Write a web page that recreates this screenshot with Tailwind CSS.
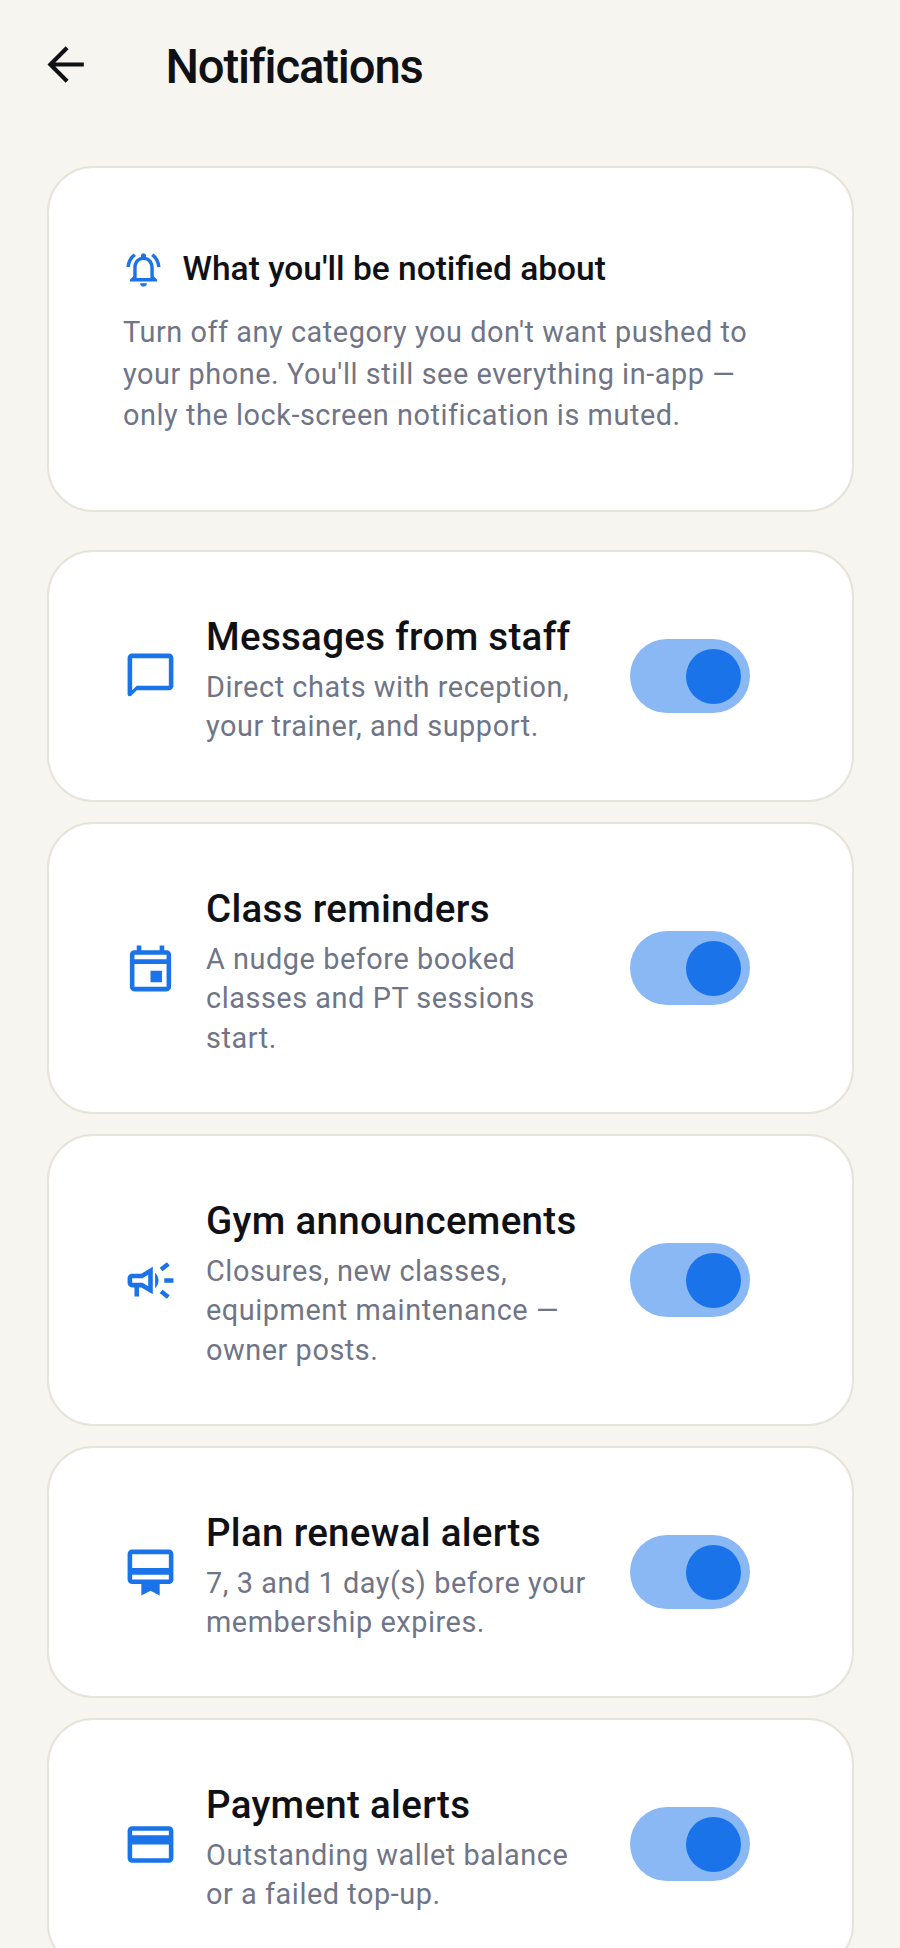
<!doctype html>
<html><head><meta charset="utf-8"><script src="https://cdn.jsdelivr.net/npm/@tailwindcss/browser@4"></script></head>
<body class="m-0">
<div class="w-[900px] h-[1948px] overflow-hidden bg-[#f6f5f0] font-['Roboto',sans-serif] text-[#0f1115]">
  <header class="h-[129px] pl-[37.5px] flex items-center">
    <svg class="w-[55px] h-[55px] shrink-0" viewBox="0 0 24 24" fill="none" stroke="#0f1115" stroke-width="1.8"><path d="M20 12H5.5M12.7 4.7 5.4 12l7.3 7.3"/></svg>
    <h1 class="ml-[73px] mt-[4px] text-[47.25px] leading-[54px] font-medium tracking-[-1.15px]">Notifications</h1>
  </header>
  <main class="mt-[37px] ml-[47px] mr-[46px] flex flex-col gap-[20px]">
    <section class="h-[346px] mb-[18px] bg-white border-2 border-[#e6e4d8] rounded-[46px] px-[74px] pt-[79px]">
      <div class="flex items-center gap-[18.5px] h-[44px]">
        <svg class="w-[41px] h-[41px] shrink-0" viewBox="0 0 24 24" fill="#1a73e8"><path d="M7.58 4.08L6.15 2.65C3.75 4.48 2.17 7.3 2.03 10.5h2c.15-2.65 1.51-4.97 3.55-6.42zm12.39 6.42h2c-.15-3.2-1.73-6.02-4.12-7.85l-1.42 1.43c2.02 1.45 3.39 3.77 3.54 6.42zM18 11c0-3.07-1.64-5.64-4.5-6.32V4c0-.83-.67-1.5-1.5-1.5s-1.5.67-1.5 1.5v.68C7.63 5.36 6 7.92 6 11v5l-2 2v1h16v-1l-2-2v-5zm-2 6H8v-6c0-2.48 1.51-4.5 4-4.5s4 2.02 4 4.5v6zm-4 5c.14 0 .27-.01.4-.04.65-.14 1.18-.58 1.44-1.18.1-.24.15-.5.15-.78h-4c.01 1.1.9 2 2.01 2z"/></svg>
        <h2 class="text-[33.5px] font-medium leading-[44px]">What you'll be notified about</h2>
      </div>
      <p class="mt-[21px] text-[28.875px] leading-[41.5px] tracking-[0.55px] text-[#6f7587]">Turn off any category you don't want pushed to your phone. You'll still see everything in-app — only the lock-screen notification is muted.</p>
    </section>

    <section class="h-[252px] bg-white border-2 border-[#e6e4d8] rounded-[46px] pl-[74px] pr-[102px] flex items-center">
      <svg class="w-[55px] h-[55px] shrink-0" viewBox="0 0 24 24" fill="#1a73e8"><path d="M20 2H4c-1.1 0-2 .9-2 2v15.59c0 .89 1.08 1.34 1.71.71L6 18h14c1.1 0 2-.9 2-2V4c0-1.1-.9-2-2-2zm0 14H6l-2 2V4h16v12z"/></svg>
      <div class="ml-[28px] mt-[2px] w-[394px] shrink-0">
        <h3 class="text-[38.5px] leading-[58px] font-medium tracking-[0.3px]">Messages from staff</h3>
        <p class="mt-[2px] text-[28.875px] leading-[39.4px] tracking-[0.55px] text-[#6f7587]">Direct chats with reception, your trainer, and support.</p>
      </div>
      <div class="ml-[30px] w-[120px] h-[74px] shrink-0 rounded-full bg-[#8ab8f4] flex items-center justify-end pr-[9px]"><div class="w-[55px] h-[55px] rounded-full bg-[#1a73e8]"></div></div>
    </section>

    <section class="h-[292px] bg-white border-2 border-[#e6e4d8] rounded-[46px] pl-[74px] pr-[102px] flex items-center">
      <svg class="w-[55px] h-[55px] shrink-0" viewBox="0 0 24 24" fill="#1a73e8"><path d="M19 4h-1V2h-2v2H8V2H6v2H5c-1.1 0-2 .9-2 2v14c0 1.1.9 2 2 2h14c1.1 0 2-.9 2-2V6c0-1.1-.9-2-2-2zm0 16H5V10h14v10zm0-12H5V6h14v2zM12 13h5v5h-5z"/></svg>
      <div class="ml-[28px] mt-[2px] w-[394px] shrink-0">
        <h3 class="text-[38.5px] leading-[58px] font-medium tracking-[0.3px]">Class reminders</h3>
        <p class="mt-[2px] text-[28.875px] leading-[39.4px] tracking-[0.55px] text-[#6f7587]">A nudge before booked classes and PT sessions start.</p>
      </div>
      <div class="ml-[30px] w-[120px] h-[74px] shrink-0 rounded-full bg-[#8ab8f4] flex items-center justify-end pr-[9px]"><div class="w-[55px] h-[55px] rounded-full bg-[#1a73e8]"></div></div>
    </section>

    <section class="h-[292px] bg-white border-2 border-[#e6e4d8] rounded-[46px] pl-[74px] pr-[102px] flex items-center">
      <svg class="w-[55px] h-[55px] shrink-0" viewBox="0 0 24 24" fill="#1a73e8"><path d="M18 11v2h4v-2h-4zm-2 6.61c.96.71 2.21 1.65 3.2 2.39.4-.53.8-1.07 1.2-1.6-.99-.74-2.24-1.68-3.2-2.4-.4.54-.8 1.08-1.2 1.61zM20.4 5.6c-.4-.53-.8-1.07-1.2-1.6-.99.74-2.24 1.68-3.2 2.4.4.53.8 1.07 1.2 1.6.96-.72 2.21-1.65 3.2-2.4zM4 9c-1.1 0-2 .9-2 2v2c0 1.1.9 2 2 2h1v4h2v-4h1l5 3V6L8 9H4zm5.03 1.71L11 9.53v4.94l-1.97-1.18-.48-.29H4v-2h4.55l.48-.29zM15.5 12c0-1.33-.58-2.53-1.5-3.35v6.69c.92-.81 1.5-2.01 1.5-3.34z"/></svg>
      <div class="ml-[28px] mt-[2px] w-[394px] shrink-0">
        <h3 class="text-[38.5px] leading-[58px] font-medium tracking-[0.3px]">Gym announcements</h3>
        <p class="mt-[2px] text-[28.875px] leading-[39.4px] tracking-[0.55px] text-[#6f7587]">Closures, new classes, equipment maintenance — owner posts.</p>
      </div>
      <div class="ml-[30px] w-[120px] h-[74px] shrink-0 rounded-full bg-[#8ab8f4] flex items-center justify-end pr-[9px]"><div class="w-[55px] h-[55px] rounded-full bg-[#1a73e8]"></div></div>
    </section>

    <section class="h-[252px] bg-white border-2 border-[#e6e4d8] rounded-[46px] pl-[74px] pr-[102px] flex items-center">
      <svg class="w-[55px] h-[55px] shrink-0" viewBox="0 0 24 24" fill="#1a73e8"><path d="M20 2H4c-1.11 0-2 .89-2 2v11c0 1.11.89 2 2 2h4v5l4-2 4 2v-5h4c1.11 0 2-.89 2-2V4c0-1.11-.89-2-2-2zm0 13H4v-2h16v2zm0-5H4V4h16v6z"/></svg>
      <div class="ml-[28px] mt-[2px] w-[394px] shrink-0">
        <h3 class="text-[38.5px] leading-[58px] font-medium tracking-[0.3px]">Plan renewal alerts</h3>
        <p class="mt-[2px] text-[28.875px] leading-[39.4px] tracking-[0.55px] text-[#6f7587]">7, 3 and 1 day(s) before your membership expires.</p>
      </div>
      <div class="ml-[30px] w-[120px] h-[74px] shrink-0 rounded-full bg-[#8ab8f4] flex items-center justify-end pr-[9px]"><div class="w-[55px] h-[55px] rounded-full bg-[#1a73e8]"></div></div>
    </section>

    <section class="h-[252px] shrink-0 bg-white border-2 border-[#e6e4d8] rounded-[46px] pl-[74px] pr-[102px] flex items-center">
      <svg class="w-[55px] h-[55px] shrink-0" viewBox="0 0 24 24" fill="#1a73e8"><path d="M20 4H4c-1.11 0-1.99.89-1.99 2L2 18c0 1.11.89 2 2 2h16c1.11 0 2-.89 2-2V6c0-1.11-.89-2-2-2zm0 14H4v-6h16v6zm0-10H4V6h16v2z"/></svg>
      <div class="ml-[28px] mt-[2px] w-[394px] shrink-0">
        <h3 class="text-[38.5px] leading-[58px] font-medium tracking-[0.3px]">Payment alerts</h3>
        <p class="mt-[2px] text-[28.875px] leading-[39.4px] tracking-[0.55px] text-[#6f7587]">Outstanding wallet balance or a failed top-up.</p>
      </div>
      <div class="ml-[30px] w-[120px] h-[74px] shrink-0 rounded-full bg-[#8ab8f4] flex items-center justify-end pr-[9px]"><div class="w-[55px] h-[55px] rounded-full bg-[#1a73e8]"></div></div>
    </section>
  </main>
</div>
</body></html>
